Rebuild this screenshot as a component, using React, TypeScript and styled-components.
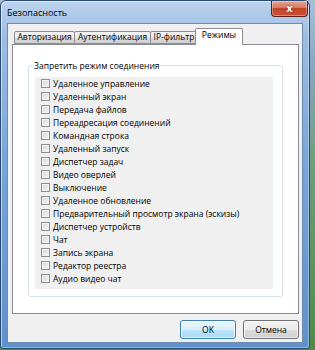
import React from "react"
import styled, { createGlobalStyle } from "styled-components"

const GlobalStyle = createGlobalStyle`
  html, body {
    margin: 0;
    padding: 0;
  }
  body {
    width: 315px;
    height: 350px;
    overflow: hidden;
    background: linear-gradient(to bottom, #a8bfd6 0%, #86a8c4 18%, #6f9f80 45%, #4f8a4c 100%);
    font-family: "Open Sans", "Noto Sans", "Liberation Sans", sans-serif;
    font-size: 8.5px;
    color: #000;
  }
`

const Window = styled.div`
  box-sizing: border-box;
  width: 310px;
  height: 349px;
  border: 1px solid #2a4a72;
  border-radius: 6px 6px 3px 3px;
  background: linear-gradient(to bottom, #bcd4ee 0%, #9dbde3 10%, #7aa6d8 45%, #5f91cb 100%);
  box-shadow: inset 1px 1px 0 rgba(255, 255, 255, 0.55),
    inset -1px -1px 0 rgba(255, 255, 255, 0.35);
  display: flex;
  flex-direction: column;
`

const TitleBar = styled.div`
  height: 22px;
  display: flex;
  justify-content: space-between;
  align-items: flex-start;
`

const Title = styled.span`
  line-height: 24px;
  padding-left: 6px;
  font-size: 9px;
`

const CloseButton = styled.div`
  box-sizing: border-box;
  width: 37px;
  height: 16px;
  margin-right: 1px;
  border: 1px solid #5e2016;
  border-top: none;
  border-radius: 0 0 4px 4px;
  background: linear-gradient(to bottom, #e7a595 0%, #d9785f 45%, #c4442a 50%, #c9503a 100%);
  box-shadow: inset 0 0 0 1px rgba(255, 255, 255, 0.35);
  display: flex;
  align-items: center;
  justify-content: center;
  color: #fff;
  font-family: "DejaVu Sans", sans-serif;
  font-weight: bold;
  font-size: 10px;
  text-shadow: 0 0 2px #6b1a0c;
`

const Client = styled.div`
  flex: 1;
  margin: 0 6px 5px 6px;
  border: 1px solid #6f8bb2;
  background: #f0f0f0;
  display: flex;
  flex-direction: column;
  padding: 4px 3px 0 4px;
`

const TabStrip = styled.div`
  display: flex;
  align-items: flex-end;
  padding-left: 2px;
  height: 16px;
  position: relative;
  z-index: 1;
`

const Tab = styled.div<{ $w: number; $active?: boolean }>`
  box-sizing: border-box;
  width: ${(p) => p.$w}px;
  height: ${(p) => (p.$active ? 17 : 13)}px;
  margin: ${(p) => (p.$active ? "0 -2px -1px -2px" : "0 -1px 0 0")};
  border: 1px solid #898c95;
  border-bottom: ${(p) => (p.$active ? "none" : "1px solid #898c95")};
  border-radius: 2px 2px 0 0;
  background: ${(p) =>
    p.$active ? "#fff" : "linear-gradient(to bottom, #f3f3f3 0%, #ebebeb 50%, #dddddd 51%, #cfcfcf 100%)"};
  display: flex;
  align-items: center;
  justify-content: center;
  line-height: 1;
  padding-bottom: ${(p) => (p.$active ? 4 : 0)}px;
  position: relative;
  z-index: ${(p) => (p.$active ? 2 : 1)};
`

const Panel = styled.div`
  box-sizing: border-box;
  height: 270px;
  border: 1px solid #898c95;
  background: #fff;
  padding: 15px 15px 0 15px;
`

const Group = styled.fieldset`
  margin: 0;
  border: 1px solid #d5dfe5;
  border-radius: 3px;
  padding: 0 9px 4px 6px;
  height: 231px;
`

const Legend = styled.legend`
  padding: 0 1px;
  margin-left: -2px;
  color: #000;
`

const OptionsBox = styled.div`
  background: #f0f0f0;
  margin-top: 6px;
  padding: 0 0 4px 6px;
`

const Row = styled.label`
  height: 13px;
  display: flex;
  align-items: center;
  gap: 3px;
  white-space: nowrap;
`

const Box = styled.span`
  box-sizing: border-box;
  width: 9px;
  height: 9px;
  flex: none;
  border: 1px solid #8e8f8f;
  background: linear-gradient(135deg, #cfd2d6 0%, #e6e7e9 50%, #f6f6f6 100%);
  box-shadow: inset 0 0 0 1px #f4f4f4;
`

const Footer = styled.div`
  display: flex;
  justify-content: flex-end;
  gap: 7px;
  padding-top: 6px;
`

const Button = styled.div<{ $default?: boolean }>`
  box-sizing: border-box;
  width: 56px;
  height: 19px;
  border: 1px solid ${(p) => (p.$default ? "#3c7fb1" : "#707070")};
  border-radius: 3px;
  background: ${(p) =>
    p.$default
      ? "linear-gradient(to bottom, #eaf6fd 0%, #d9f0fc 50%, #bee6fd 51%, #a7d9f5 100%)"
      : "linear-gradient(to bottom, #f2f2f2 0%, #ebebeb 50%, #dddddd 51%, #cfcfcf 100%)"};
  box-shadow: inset 0 0 0 1px rgba(255, 255, 255, 0.7);
  display: flex;
  align-items: center;
  justify-content: center;
`

const tabs = [
  { label: "Авторизация", w: 61 },
  { label: "Аутентификация", w: 77 },
  { label: "IP-фильтр", w: 48 },
  { label: "Режимы", w: 48, active: true },
]

const options = [
  "Удаленное управление",
  "Удаленный экран",
  "Передача файлов",
  "Переадресация соединений",
  "Командная строка",
  "Удаленный запуск",
  "Диспетчер задач",
  "Видео оверлей",
  "Выключение",
  "Удаленное обновление",
  "Предварительный просмотр экрана (эскизы)",
  "Диспетчер устройств",
  "Чат",
  "Запись экрана",
  "Редактор реестра",
  "Аудио видео чат",
]

const App = () => (
  <>
    <GlobalStyle />
    <Window>
      <TitleBar>
        <Title>Безопасность</Title>
        <CloseButton>x</CloseButton>
      </TitleBar>
      <Client>
        <TabStrip>
          {tabs.map((t) => (
            <Tab key={t.label} $w={t.w} $active={t.active}>
              {t.label}
            </Tab>
          ))}
        </TabStrip>
        <Panel>
          <Group>
            <Legend>Запретить режим соединения</Legend>
            <OptionsBox>
              {options.map((o) => (
                <Row key={o}>
                  <Box />
                  {o}
                </Row>
              ))}
            </OptionsBox>
          </Group>
        </Panel>
        <Footer>
          <Button $default>OK</Button>
          <Button>Отмена</Button>
        </Footer>
      </Client>
    </Window>
  </>
)

export default App
